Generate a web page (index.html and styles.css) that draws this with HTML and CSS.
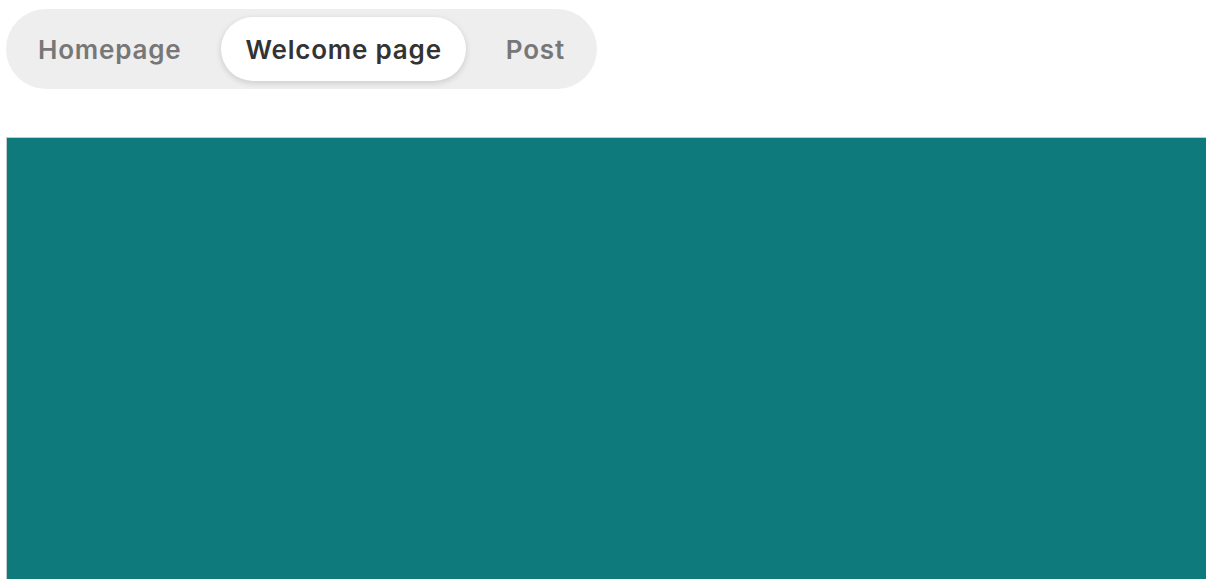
FILE: index.html
```html
<!DOCTYPE html>
<html lang="en">
<head>
<meta charset="utf-8">
<title>Tabs</title>
<link rel="stylesheet" href="styles.css">
</head>
<body>
<div class="page">
  <nav class="tabs">
    <div class="tab">Homepage</div>
    <div class="tab active">Welcome page</div>
    <div class="tab">Post</div>
  </nav>
  <div class="panel"></div>
</div>
</body>
</html>
```

FILE: styles.css
```css
html, body {
  margin: 0;
  padding: 0;
  background: #ffffff;
  overflow: hidden;
}
.page {
  padding: 9px 0 0 6px;
  font-family: Inter, "Noto Sans", sans-serif;
}
.tabs {
  display: inline-flex;
  gap: 16px;
  padding: 8px;
  background: #eeeeee;
  border-radius: 40px;
}
.tab {
  height: 64px;
  padding: 0 24px;
  display: flex;
  align-items: center;
  font-size: 26px;
  font-weight: 600;
  letter-spacing: 0.8px;
  color: #777777;
  border-radius: 32px;
  white-space: nowrap;
}
.tab.active {
  background: #ffffff;
  color: #333333;
  box-shadow: 0 2px 6px rgba(0, 0, 0, 0.15);
}
.panel {
  margin-top: 48px;
  height: 460px;
  background: #0e7a7c;
  border: 1px solid #c4cccc;
  border-right: none;
  border-bottom: none;
}
```
